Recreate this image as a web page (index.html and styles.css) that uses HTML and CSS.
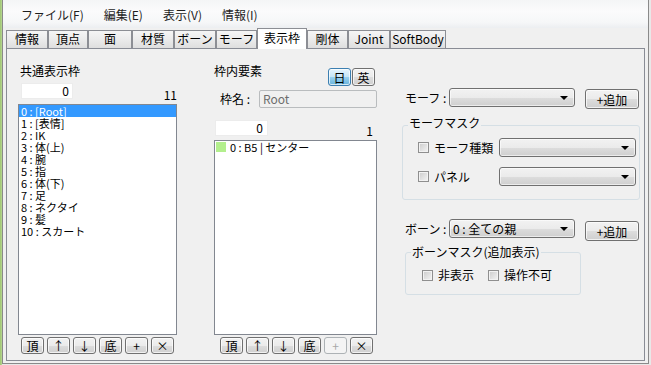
FILE: index.html
```html
<!DOCTYPE html>
<html lang="ja">
<head>
<meta charset="utf-8">
<title>表示枠</title>
<link rel="stylesheet" href="styles.css">
</head>
<body>
<div class="window">
  <div class="menubar">
    <span class="menu">ファイル(F)</span>
    <span class="menu">編集(E)</span>
    <span class="menu">表示(V)</span>
    <span class="menu">情報(I)</span>
  </div>
  <div class="tabstrip">
    <div class="tab tab-info">情報</div>
    <div class="tab tab-vert">頂点</div>
    <div class="tab tab-face">面</div>
    <div class="tab tab-mat">材質</div>
    <div class="tab tab-bone">ボーン</div>
    <div class="tab tab-morph">モーフ</div>
    <div class="tab tab-frame active">表示枠</div>
    <div class="tab tab-body">剛体</div>
    <div class="tab tab-joint">Joint</div>
    <div class="tab tab-soft">SoftBody</div>
  </div>
  <div class="page">
    <div class="col col-left">
      <div class="label">共通表示枠</div>
      <div class="count-row">
        <div class="numbox">0</div>
        <div class="count">11</div>
      </div>
      <ul class="list list-left">
        <li class="sel">0 : [Root]</li>
        <li>1 : [表情]</li>
        <li>2 : IK</li>
        <li>3 : 体(上)</li>
        <li>4 : 腕</li>
        <li>5 : 指</li>
        <li>6 : 体(下)</li>
        <li>7 : 足</li>
        <li>8 : ネクタイ</li>
        <li>9 : 髪</li>
        <li>10 : スカート</li>
      </ul>
      <div class="btnrow">
        <button class="sbtn">頂</button>
        <button class="sbtn">↑</button>
        <button class="sbtn">↓</button>
        <button class="sbtn">底</button>
        <button class="sbtn">+</button>
        <button class="sbtn">×</button>
      </div>
    </div>

    <div class="col col-mid">
      <div class="mid-head">
        <div class="label">枠内要素</div>
        <div class="toggles">
          <button class="tbtn on">日</button>
          <button class="tbtn">英</button>
        </div>
      </div>
      <div class="name-row">
        <span class="name-label">枠名 :</span>
        <div class="name-input">Root</div>
      </div>
      <div class="count-row count-row-mid">
        <div class="numbox">0</div>
        <div class="count">1</div>
      </div>
      <ul class="list list-mid">
        <li class="elem"><span class="swatch"></span><span>0 : B5 | センター</span></li>
      </ul>
      <div class="btnrow btnrow-mid">
        <button class="sbtn">頂</button>
        <button class="sbtn">↑</button>
        <button class="sbtn">↓</button>
        <button class="sbtn">底</button>
        <button class="sbtn disabled">+</button>
        <button class="sbtn">×</button>
      </div>
    </div>

    <div class="col col-right">
      <div class="prop-row">
        <span class="rlabel">モーフ :</span>
        <div class="combo combo-main"><span class="combo-text"></span><span class="arrow"></span></div>
        <button class="addbtn">+追加</button>
      </div>
      <fieldset class="group group-morph">
        <legend>モーフマスク</legend>
        <div class="cbrow">
          <span class="cb"></span><span class="cbtext">モーフ種類</span>
          <div class="combo combo-mask"><span class="combo-text"></span><span class="arrow"></span></div>
        </div>
        <div class="cbrow cbrow-2">
          <span class="cb"></span><span class="cbtext">パネル</span>
          <div class="combo combo-mask"><span class="combo-text"></span><span class="arrow"></span></div>
        </div>
      </fieldset>
      <div class="prop-row prop-row-bone">
        <span class="rlabel">ボーン :</span>
        <div class="combo combo-main"><span class="combo-text">0 : 全ての親</span><span class="arrow"></span></div>
        <button class="addbtn addbtn-bone">+追加</button>
      </div>
      <fieldset class="group group-bone">
        <legend>ボーンマスク(追加表示)</legend>
        <div class="cbrow cbrow-bone">
          <span class="cb"></span><span class="cbtext">非表示</span>
          <span class="cb cb-second"></span><span class="cbtext">操作不可</span>
        </div>
      </fieldset>
    </div>
  </div>
</div>
</body>
</html>
```
FILE: styles.css
```css
* { box-sizing: border-box; }
html, body { margin: 0; padding: 0; }
body {
  width: 651px;
  height: 365px;
  overflow: hidden;
  background: linear-gradient(to right, #9dc56f 0, #b9d795 2px, #e8e8e8 2px);
  font-family: "Noto Sans CJK JP", "Noto Sans", sans-serif;
  font-size: 12px;
  color: #000;
}
.window {
  margin-left: 2px;
  width: 647px;
  height: 364px;
  border: 1px solid #8a8a8a;
  border-top: none;
  background: #f0f0f0;
  display: flex;
  flex-direction: column;
}

/* menu */
.menubar {
  height: 28px;
  display: flex;
  align-items: center;
  padding: 1px 0 0 8px;
  background: linear-gradient(#f4f5f6, #fbfbfc 40%, #f6f7f8 80%, #eceef1);
  color: #1e1e1e;
}
.menu { padding: 0 10px; line-height: 16px; }

/* tabs */
.tabstrip {
  height: 20px;
  display: flex;
  align-items: flex-end;
  padding-left: 3px;
}
.tab {
  height: 18px;
  border: 1px solid #8c8e94;
  border-bottom: none;
  background: linear-gradient(#f5f5f5, #ebebeb 50%, #dedede);
  text-align: center;
  line-height: 16px;
  white-space: nowrap;
}
.tab.active {
  height: 21px;
  margin-bottom: -1px;
  background: #fff;
  position: relative;
  z-index: 1;
  line-height: 17px;
}
.tab-info { width: 42px; }
.tab-vert { width: 40px; }
.tab-face { width: 44px; }
.tab-mat { width: 42px; }
.tab-bone { width: 42px; }
.tab-morph { width: 41px; }
.tab-frame { width: 50px; }
.tab-body { width: 41px; }
.tab-joint { width: 42px; }
.tab-soft { width: 56px; }

/* page */
.page {
  margin-left: 3px;
  width: 639px;
  height: 313px;
  border: 1px solid #898c95;
  background: #f0f0f0;
  display: flex;
  align-items: flex-start;
}
.col { display: flex; flex-direction: column; }
.col-left { margin-left: 11px; width: 159px; padding-top: 15px; }
.col-mid { margin-left: 37px; width: 163px; padding-top: 15px; }
.col-right { margin-left: 25px; width: 238px; padding-top: 39px; }

.label { line-height: 14px; padding-left: 2px; }
.col-mid .label { padding-left: 0; }

.count-row {
  display: flex;
  justify-content: space-between;
  margin-top: 5px;
}
.numbox {
  width: 52px;
  height: 16px;
  margin-left: 3px;
  background: #fff;
  border: 1px solid #ececec;
  text-align: right;
  padding-right: 3px;
  line-height: 14px;
}
.count {
  line-height: 14px;
  align-self: flex-end;
  margin-bottom: -3px;
}

.list {
  margin: 0;
  padding: 0;
  list-style: none;
  background: #fff;
  border: 1px solid #828790;
  font-size: 11px;
  line-height: 12px;
}
.list li { height: 12px; padding-left: 2px; white-space: nowrap; }
.list li.sel { background: #3399ff; color: #fff; }
.list-left { margin-top: 5px; height: 231px; }

.btnrow { display: flex; gap: 3px; margin-top: 2px; padding-left: 3px; }
.btnrow-mid { padding-left: 6px; }
.sbtn, .tbtn, .addbtn {
  font-family: inherit;
  font-size: 12px;
  color: #000;
  padding: 0;
  margin: 0;
  border: 1px solid #707070;
  border-radius: 3px;
  background: linear-gradient(#f2f2f2, #ebebeb 50%, #dddddd 51%, #cfcfcf);
  box-shadow: inset 0 0 0 1px rgba(255,255,255,0.7);
}
.sbtn { width: 23px; height: 17px; line-height: 14px; }
.sbtn.disabled { border-color: #adb2b5; background: #f4f4f4; color: #a8a8a8; box-shadow: none; }

/* middle */
.mid-head { display: flex; height: 22px; }
.toggles { margin-left: auto; margin-top: 4px; display: flex; gap: 1px; margin-right: 2px; }
.tbtn { width: 23px; height: 18px; line-height: 15px; }
.tbtn.on {
  border-color: #3c7fb1;
  background: linear-gradient(#e5f4fc, #c4e5f6 50%, #98d1ef 51%, #68b3db);
}
.name-row { display: flex; align-items: center; margin-top: 4px; height: 18px; }
.name-label { padding-left: 6px; line-height: 18px; }
.name-input {
  margin-left: auto;
  width: 118px;
  height: 18px;
  border: 1px solid #b9bcbe;
  border-radius: 2px;
  background: #f0f0f0;
  color: #6d6d6d;
  padding-left: 3px;
  line-height: 16px;
}
.count-row-mid { margin-top: 12px; }
.count-row-mid .numbox { width: 53px; margin-left: 1px; padding-right: 4px; }
.count-row-mid .count { margin-right: 4px; margin-bottom: -2px; }
.list-mid { margin-top: 4px; height: 195px; }
.list li.elem { display: flex; align-items: center; gap: 4px; padding-left: 1px; }
.swatch { width: 10px; height: 10px; background: #b3ef8d; }

/* right */
.prop-row { display: flex; align-items: flex-start; }
.rlabel { width: 47px; padding-left: 3px; line-height: 20px; }
.combo {
  height: 19px;
  border: 1px solid #707070;
  border-radius: 3px;
  background: linear-gradient(#f2f2f2, #ebebeb 50%, #dddddd 51%, #cfcfcf);
  display: flex;
  align-items: center;
  box-shadow: inset 0 0 0 1px rgba(255,255,255,0.6);
}
.combo-main { width: 126px; }
.combo-text { flex: 1; padding-left: 3px; line-height: 17px; white-space: nowrap; }
.arrow {
  width: 0;
  height: 0;
  border-left: 4px solid transparent;
  border-right: 4px solid transparent;
  border-top: 4px solid #000;
  margin-right: 6px;
}
.addbtn { margin-left: 10px; width: 54px; height: 20px; margin-top: 1px; line-height: 17px; }
.addbtn-bone { margin-top: 2px; }

.group {
  margin: 7px 0 0 0;
  min-width: 0;
  border: 1px solid #d5dfe5;
  border-radius: 3px;
}
.group legend { padding: 0 1px; line-height: 14px; }
.group-morph { width: 238px; padding: 3px 3px 13px 5px; }
.group-morph legend { padding-bottom: 5px; }
.cbrow { display: flex; align-items: center; height: 19px; margin-left: 10px; }
.cbrow-2 { margin-top: 10px; }
.cb {
  width: 11px;
  height: 11px;
  border: 1px solid #8f8f8f;
  background: linear-gradient(135deg, #cbcbcb, #f4f4f4);
  box-shadow: inset 0 0 0 1px #f2f2f2;
  flex: none;
}
.cbtext { margin-left: 5px; line-height: 14px; white-space: nowrap; }
.combo-mask { width: 137px; margin-left: auto; }

.prop-row-bone { margin-top: 19px; }
.group-bone { margin: 4px 0 0 3px; width: 176px; padding: 9px 3px 12px 5px; }
.cbrow-bone { height: 14px; margin-left: 11px; }
.cb-second { margin-left: 14px; }
```
